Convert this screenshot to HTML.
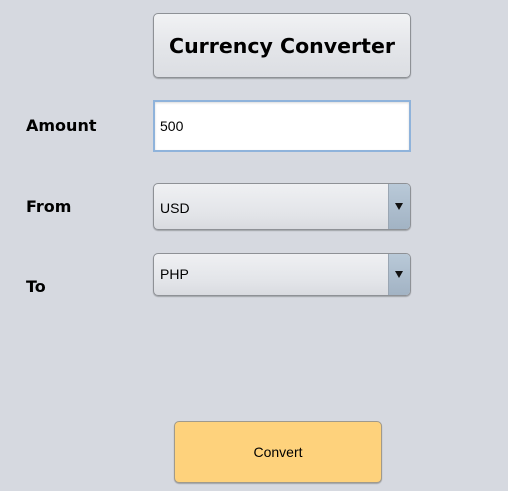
<!DOCTYPE html>
<html><head><style>
body{margin:0;width:508px;height:491px;background:#d6d9e0;position:relative;overflow:hidden;font-family:"Liberation Sans",sans-serif}
.a{position:absolute;box-sizing:border-box}
.lbl{position:absolute;font-family:"DejaVu Sans",sans-serif;font-weight:bold;font-size:16px;color:#000;left:26px}
.btn{border:1px solid #8e9196;border-radius:5px;background:linear-gradient(#f1f2f4,#e2e4e8 60%,#dcdee3);box-shadow:0 1px 1px rgba(0,0,0,.25)}
.combo{border:1px solid #8e9196;border-radius:5px;background:linear-gradient(#eff0f3,#e2e4e8 70%,#d9dbe0);box-shadow:0 1px 1px rgba(0,0,0,.25);font-size:14px;color:#000}
.arr{position:absolute;right:0;top:0;bottom:0;width:21px;background:linear-gradient(#b9c9d8,#a2b3c4);border-left:1px solid #9aa6b3;border-radius:0 4px 4px 0}
.arr:after{content:"";position:absolute;left:6px;top:50%;margin-top:-4px;border-left:4px solid transparent;border-right:4px solid transparent;border-top:7px solid #111}
</style></head><body>
<div class="a btn" style="left:153px;top:13px;width:258px;height:65px;display:flex;align-items:center;justify-content:center;font-family:'DejaVu Sans',sans-serif;font-weight:bold;font-size:20.5px">Currency Converter</div>
<div class="lbl" style="top:116px">Amount</div>
<div class="a" style="left:153px;top:100px;width:258px;height:52px;background:#fff;border:2px solid #8fb3db;box-shadow:inset 0 1px 2px rgba(0,0,0,.15);font-size:14px;padding:16px 0 0 5px">500</div>
<div class="lbl" style="top:197px">From</div>
<div class="a combo" style="left:153px;top:183px;width:258px;height:47px;padding:16px 0 0 6px">USD<div class="arr"></div></div>
<div class="lbl" style="top:277px">To</div>
<div class="a combo" style="left:153px;top:253px;width:258px;height:43px;padding:12px 0 0 6px">PHP<div class="arr"></div></div>
<div class="a" style="left:174px;top:421px;width:208px;height:62px;border:1px solid #a09a8c;border-radius:5px;background:#fed27c;box-shadow:0 1px 1px rgba(0,0,0,.25);display:flex;align-items:center;justify-content:center;font-size:14px">Convert</div>
</body></html>
